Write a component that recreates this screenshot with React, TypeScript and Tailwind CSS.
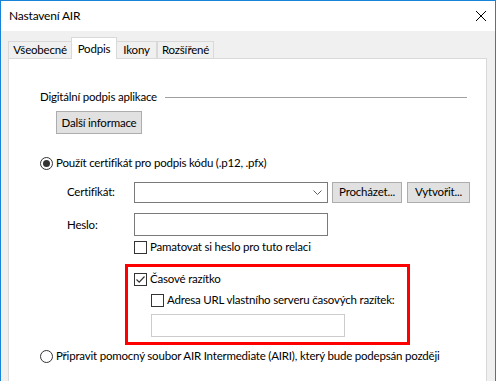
import React from 'react';

const Checkbox: React.FC<{ checked?: boolean }> = ({ checked }) => (
  <span className="w-[13px] h-[13px] border border-[#333333] bg-white flex items-center justify-center shrink-0">
    {checked && (
      <svg width="11" height="11" viewBox="0 0 11 11">
        <path d="M1.5 5.5 L4.2 8.2 L9.5 2.5" fill="none" stroke="#333333" strokeWidth="1.2" />
      </svg>
    )}
  </span>
);

const Radio: React.FC<{ checked?: boolean }> = ({ checked }) => (
  <span className="w-[13px] h-[13px] rounded-full border border-[#333333] bg-white flex items-center justify-center shrink-0">
    {checked && <span className="w-[7px] h-[7px] rounded-full bg-[#333333]" />}
  </span>
);

const Button: React.FC<{ label: string; className?: string }> = ({ label, className = '' }) => (
  <div className={`h-[21px] bg-[#e1e1e1] border border-[#adadad] flex items-center justify-center ${className}`}>
    {label}
  </div>
);

const TABS = ['Všeobecné', 'Podpis', 'Ikony', 'Rozšířené'];
const TAB_WIDTHS = ['w-[63px]', 'w-[46px]', 'w-[40px]', 'w-[57px]'];

export default function App() {
  return (
    <div
      className="w-[496px] h-[381px] overflow-hidden bg-[#f0f0f0] border border-b-0 border-[#1883d7] flex flex-col text-[11.5px] tracking-[-0.2px] leading-[16px] text-black whitespace-nowrap"
      style={{ fontFamily: 'Lato, "Noto Sans", sans-serif' }}
    >
      {/* title bar */}
      <div className="h-[30px] bg-white flex items-center justify-between pl-[8px] pr-[9px] shrink-0">
        <span className="text-[12px]">Nastavení AIR</span>
        <svg width="10" height="10" viewBox="0 0 10 10">
          <path d="M0 0 L10 10 M10 0 L0 10" stroke="#000" strokeWidth="1" />
        </svg>
      </div>

      <div className="pt-[6px] pl-[7px]">
        {/* tabs */}
        <div className="flex items-end h-[21px]">
          {TABS.map((t, i) =>
            i === 1 ? (
              <div
                key={t}
                className={`${TAB_WIDTHS[i]} h-[22px] -mb-px relative z-10 bg-white border border-b-0 border-[#d9d9d9] flex items-center justify-center`}
              >
                {t}
              </div>
            ) : (
              <div
                key={t}
                className={`${TAB_WIDTHS[i]} h-[17px] bg-[#f0f0f0] border border-b-0 border-[#d9d9d9] flex items-center justify-center ${i === 2 ? 'border-l-0' : ''} ${i === 0 ? 'border-r-0' : ''}`}
              >
                {t}
              </div>
            )
          )}
        </div>

        {/* panel */}
        <div className="w-[479px] h-[340px] bg-white border border-[#d9d9d9] flex flex-col">
          <div className="mt-[30px] pl-[31px] pr-[19px] flex items-center">
            <span>Digitální podpis aplikace</span>
            <div className="flex-1 h-px bg-[#a0a0a0] ml-[8px]" />
          </div>

          <Button label="Další informace" className="ml-[47px] mt-[6px] w-[86px] h-[23px]" />

          <div className="mt-[21px] ml-[31px] flex items-center gap-[3px]">
            <Radio checked />
            <span>Použít certifikát pro podpis kódu (.p12, .pfx)</span>
          </div>

          <div className="mt-[10px] ml-[58px] flex items-center h-[22px]">
            <span className="w-[67px]">Certifikát:</span>
            <div className="w-[194px] h-[21px] border border-[#7a7a7a] bg-white flex items-center justify-end pr-[5px]">
              <svg width="9" height="5" viewBox="0 0 9 5">
                <path d="M0.5 0.5 L4.5 4.5 L8.5 0.5" fill="none" stroke="#606060" strokeWidth="1" />
              </svg>
            </div>
            <Button label="Procházet..." className="ml-[4px] w-[70px]" />
            <Button label="Vytvořit..." className="ml-[5px] w-[63px]" />
          </div>

          <div className="mt-[10px] ml-[58px] flex items-center">
            <span className="w-[67px]">Heslo:</span>
            <div className="w-[194px] h-[23px] border border-[#7a7a7a] bg-white" />
          </div>

          <div className="mt-[3px] ml-[125px] flex items-center gap-[3px]">
            <Checkbox />
            <span>Pamatovat si heslo pro tuto relaci</span>
          </div>

          <div className="mt-[9px] ml-[116px] w-[285px] h-[81px] border-[3px] border-[#ff0000] pl-[6px] pt-[4px] flex flex-col">
            <div className="flex items-center gap-[3px]">
              <Checkbox checked />
              <span>Časové razítko</span>
            </div>
            <div className="mt-[5px] ml-[17px] flex items-center gap-[3px]">
              <Checkbox />
              <span>Adresa URL vlastního serveru časových razítek:</span>
            </div>
            <div className="mt-[6px] ml-[17px] w-[194px] h-[23px] border border-[#cccccc] bg-white" />
          </div>

          <div className="mt-[3px] ml-[31px] flex items-center gap-[3px]">
            <Radio />
            <span>Připravit pomocný soubor AIR Intermediate (AIRI), který bude podepsán později</span>
          </div>
        </div>
      </div>
    </div>
  );
}
